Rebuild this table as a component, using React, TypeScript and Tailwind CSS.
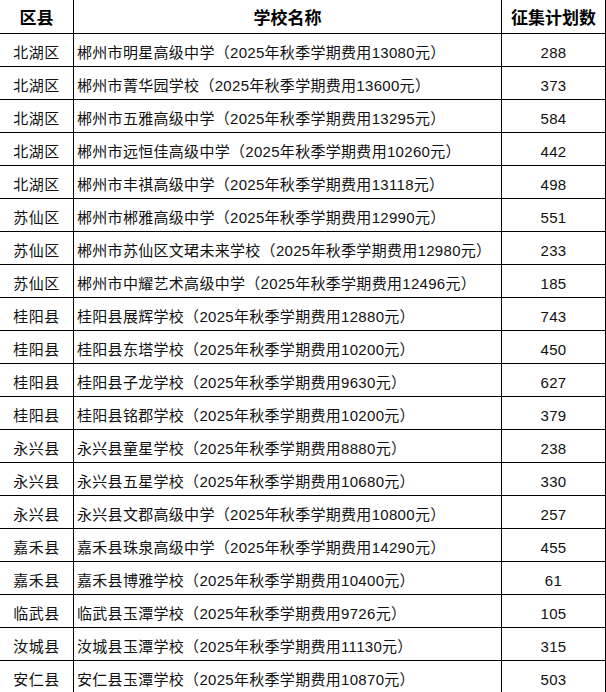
import React from "react";

const rows: [string, string, string][] = [
  ["北湖区", "郴州市明星高级中学（2025年秋季学期费用13080元）", "288"],
  ["北湖区", "郴州市菁华园学校（2025年秋季学期费用13600元）", "373"],
  ["北湖区", "郴州市五雅高级中学（2025年秋季学期费用13295元）", "584"],
  ["北湖区", "郴州市远恒佳高级中学（2025年秋季学期费用10260元）", "442"],
  ["北湖区", "郴州市丰祺高级中学（2025年秋季学期费用13118元）", "498"],
  ["苏仙区", "郴州市郴雅高级中学（2025年秋季学期费用12990元）", "551"],
  ["苏仙区", "郴州市苏仙区文珺未来学校（2025年秋季学期费用12980元）", "233"],
  ["苏仙区", "郴州市中耀艺术高级中学（2025年秋季学期费用12496元）", "185"],
  ["桂阳县", "桂阳县展辉学校（2025年秋季学期费用12880元）", "743"],
  ["桂阳县", "桂阳县东塔学校（2025年秋季学期费用10200元）", "450"],
  ["桂阳县", "桂阳县子龙学校（2025年秋季学期费用9630元）", "627"],
  ["桂阳县", "桂阳县铭郡学校（2025年秋季学期费用10200元）", "379"],
  ["永兴县", "永兴县童星学校（2025年秋季学期费用8880元）", "238"],
  ["永兴县", "永兴县五星学校（2025年秋季学期费用10680元）", "330"],
  ["永兴县", "永兴县文郡高级中学（2025年秋季学期费用10800元）", "257"],
  ["嘉禾县", "嘉禾县珠泉高级中学（2025年秋季学期费用14290元）", "455"],
  ["嘉禾县", "嘉禾县博雅学校（2025年秋季学期费用10400元）", "61"],
  ["临武县", "临武县玉潭学校（2025年秋季学期费用9726元）", "105"],
  ["汝城县", "汝城县玉潭学校（2025年秋季学期费用11130元）", "315"],
  ["安仁县", "安仁县玉潭学校（2025年秋季学期费用10870元）", "503"],
];

export default function App() {
  return (
    <div
      className="w-[606px] h-[692px] overflow-hidden bg-white text-black"
      style={{ fontFamily: '"Liberation Sans", "Noto Sans CJK SC", sans-serif' }}
    >
      <div className="grid grid-cols-[74px_428px_104px] h-[34px] border-b border-black text-[17px] font-bold leading-none">
        <div className="flex items-center justify-center pt-[4px] border-r border-black">区县</div>
        <div className="flex items-center justify-center pt-[4px] border-r border-black">学校名称</div>
        <div className="flex items-center justify-center pt-[4px] border-r border-black">征集计划数</div>
      </div>
      {rows.map(([d, s, n], i) => (
        <div
          key={i}
          className="grid grid-cols-[74px_428px_104px] h-[33px] border-b border-black text-[15px] leading-none text-[#111]"
        >
          <div className="flex items-center justify-center pt-[5px] border-r border-black tracking-[0.5px]">{d}</div>
          <div className="flex items-center justify-start pl-[3px] pt-[5px] border-r border-black whitespace-nowrap tracking-[0.3px]">{s}</div>
          <div className="flex items-center justify-center pt-[5px] border-r border-black tracking-[0.3px]">{n}</div>
        </div>
      ))}
    </div>
  );
}
